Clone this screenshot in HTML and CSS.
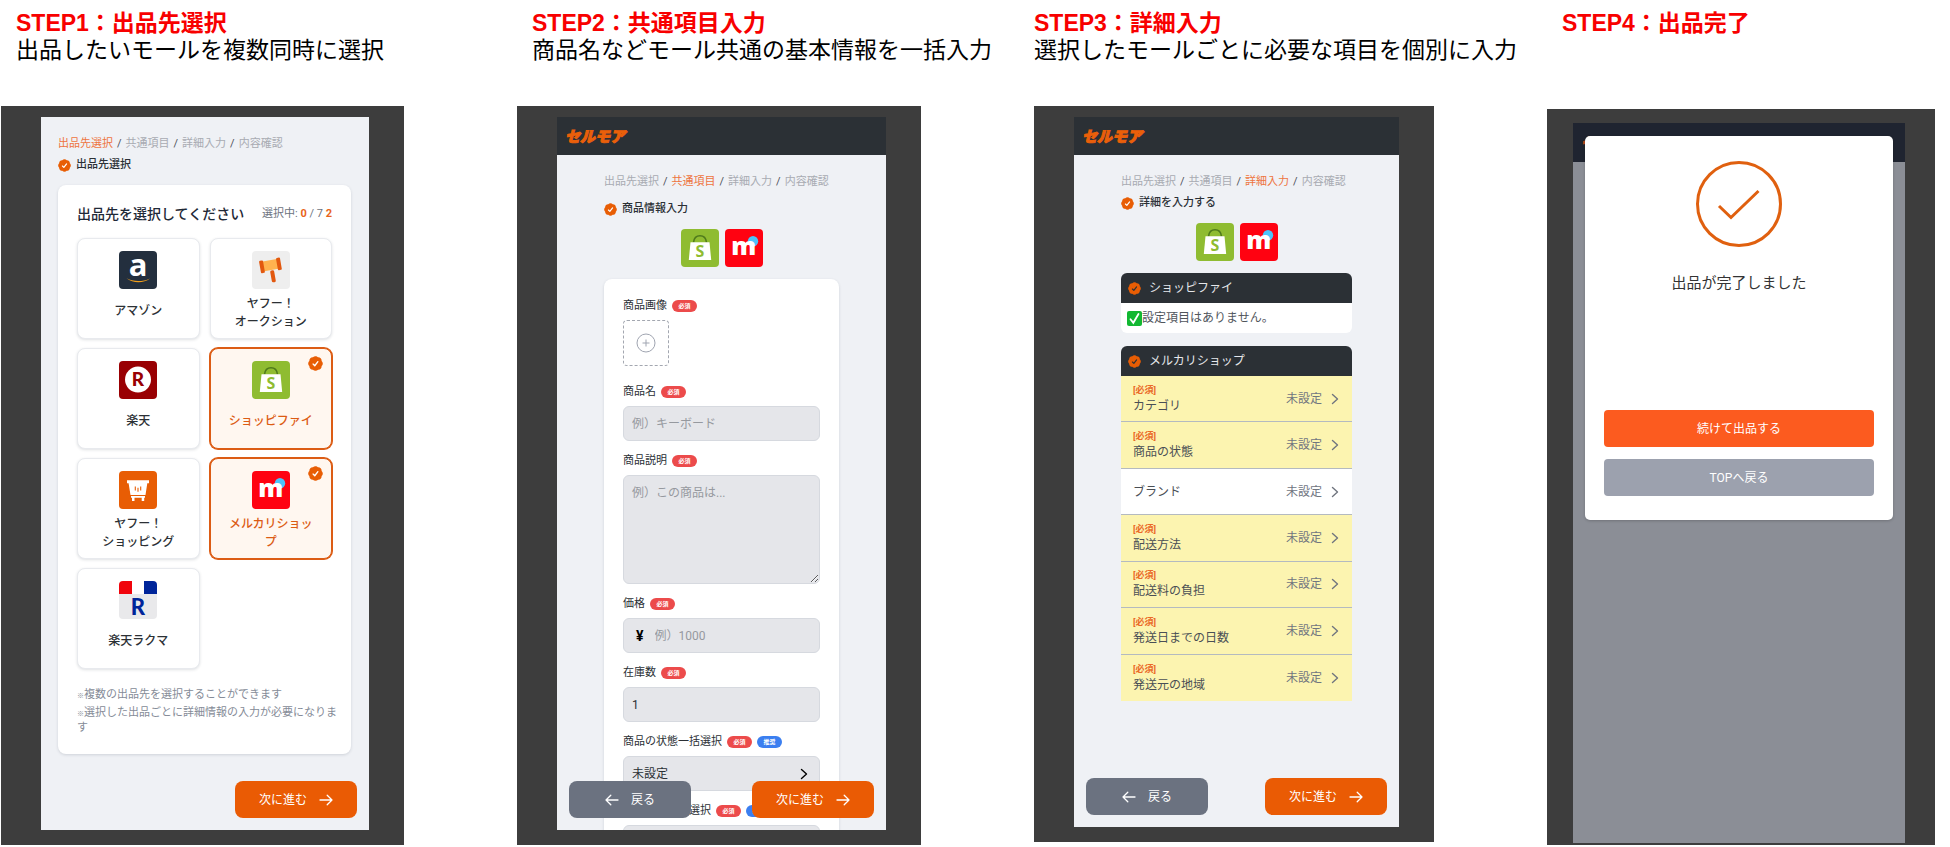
FILE: index.html
```html
<!DOCTYPE html>
<html lang="ja">
<head>
<meta charset="utf-8">
<meta name="viewport" content="width=device-width, initial-scale=1">
<title>セルモア 出品の流れ</title>
<link rel="stylesheet" href="styles.css">
</head>
<body>
<svg class="sprite" aria-hidden="true">
  <symbol id="badge" viewBox="2 2 20 20">
    <path fill="#e85d04" d="M8.603 3.799A4.49 4.49 0 0 1 12 2.25c1.357 0 2.573.6 3.397 1.549a4.49 4.49 0 0 1 3.498 1.307 4.491 4.491 0 0 1 1.307 3.497A4.49 4.49 0 0 1 21.75 12a4.49 4.49 0 0 1-1.549 3.397 4.491 4.491 0 0 1-1.307 3.497 4.491 4.491 0 0 1-3.497 1.307A4.49 4.49 0 0 1 12 21.75a4.49 4.49 0 0 1-3.397-1.549 4.49 4.49 0 0 1-3.498-1.306 4.491 4.491 0 0 1-1.307-3.498A4.49 4.49 0 0 1 2.25 12c0-1.357.6-2.573 1.549-3.397a4.49 4.49 0 0 1 1.307-3.497 4.49 4.49 0 0 1 3.497-1.307Z"/>
    <path fill="none" stroke="currentColor" stroke-width="1.8" stroke-linecap="round" stroke-linejoin="round" d="M8.8 12.8l2.2 2.2 4.2-5.4"/>
  </symbol>
  <symbol id="shopify" viewBox="0 0 38 38">
    <rect width="38" height="38" rx="4" fill="#8fbc31"/>
    <path d="M12.500 13.500C13 9 15.500 6.800 19 6.800s6 2.200 6.500 6.700" fill="none" stroke="#4f7a1c" stroke-width="1.600"/>
    <path d="M9.500 13.300h19L30.200 31H7.800z" fill="#fff"/>
    <text x="18.800" y="27.500" text-anchor="middle" class="mark mark-s">S</text>
  </symbol>
  <symbol id="mercari" viewBox="0 0 38 38">
    <rect width="38" height="38" rx="4" fill="#ff0211"/>
    <circle cx="28" cy="12.300" r="5.200" fill="#4dc3fa"/>
    <text x="18.800" y="25.500" text-anchor="middle" class="mark mark-m">m</text>
  </symbol>
  <symbol id="amazon" viewBox="0 0 38 38">
    <rect width="38" height="38" rx="4" fill="#232f3e"/>
    <text x="19" y="24.500" text-anchor="middle" class="mark mark-a">a</text>
    <path d="M7.500 27.300c7 3.600 16 3.600 23.500.1-6.500 5.100-17 5-23.500-.1z" fill="#f3a01c"/>
  </symbol>
  <symbol id="auction" viewBox="0 0 38 38">
    <rect width="38" height="38" rx="4" fill="#eee"/>
    <g transform="rotate(-10 19 14)">
      <rect x="10" y="9" width="17" height="10" fill="#ffb24f"/>
      <rect x="7.800" y="8" width="4" height="12.500" rx="1" fill="#e2580f"/>
      <rect x="25" y="8" width="4" height="12.500" rx="1" fill="#e2580f"/>
      <rect x="17" y="19.500" width="4" height="12" rx="1.500" fill="#e2580f"/>
    </g>
  </symbol>
  <symbol id="rakuten" viewBox="0 0 38 38">
    <rect width="38" height="38" rx="4" fill="#990003"/>
    <circle cx="19" cy="18.600" r="13" fill="#fff"/>
    <text x="19" y="25.300" text-anchor="middle" class="mark mark-r">R</text>
  </symbol>
  <symbol id="yshop" viewBox="0 0 38 38">
    <rect width="38" height="38" rx="4" fill="#e85d04"/>
    <path d="M8 9.300h22v3h-1.700L26.500 24h-15L9.600 12.300H8z" fill="#fff"/>
    <path d="M12 25h14v1.700h-.8v3.200h-2.500v-3.200h-7.200v3.200H13v-3.200h-1z" fill="#fff"/>
    <path d="M16.300 15.500v4M19 16.800v4M21.700 15.500v4" stroke="#e85d04" stroke-width="1.100"/>
  </symbol>
  <symbol id="rakuma" viewBox="0 0 38 38">
    <path d="M0 13h38v21a4 4 0 0 1-4 4H4a4 4 0 0 1-4-4z" fill="#e9e9eb"/>
    <path d="M0 13V4a4 4 0 0 1 4-4h9v13z" fill="#f0040c"/>
    <path d="M25 0h9a4 4 0 0 1 4 4v9H25z" fill="#00259a"/>
    <text x="19" y="33.500" text-anchor="middle" class="mark mark-k">R</text>
  </symbol>
  <symbol id="arrow-right" viewBox="0 0 14 14"><path d="M1 7h12M8.200 2.200 13 7l-4.800 4.800" fill="none" stroke="currentColor" stroke-width="1.300" stroke-linecap="round" stroke-linejoin="round"/></symbol>
  <symbol id="arrow-left" viewBox="0 0 14 14"><path d="M13 7H1M5.800 2.200 1 7l4.800 4.800" fill="none" stroke="currentColor" stroke-width="1.300" stroke-linecap="round" stroke-linejoin="round"/></symbol>
  <symbol id="chevron" viewBox="0 0 8 12"><path d="M1.500 1.500 6.500 6l-5 4.500" fill="none" stroke="currentColor" stroke-width="1.400" stroke-linecap="round" stroke-linejoin="round"/></symbol>
</svg>

<main class="board">
  <section class="step">
    <header class="caption">
      <h2>STEP1：出品先選択</h2>
      <p>出品したいモールを複数同時に選択</p>
    </header>
    <div class="stage">
      <div class="screen">
        <div class="content content-wide">
          <nav class="crumbs"><span class="now">出品先選択</span><i>/</i><span>共通項目</span><i>/</i><span>詳細入力</span><i>/</i><span>内容確認</span></nav>
          <h3 class="page-title"><svg><use href="#badge"/></svg>出品先選択</h3>
          <div class="card">
            <div class="card-head">
              <h4>出品先を選択してください</h4>
              <p>選択中: <b>0</b> / 7 <b>2</b></p>
            </div>
            <div class="malls">
              <label class="mall"><input type="checkbox"><svg class="logo"><use href="#amazon"/></svg><span>アマゾン</span></label>
              <label class="mall"><input type="checkbox"><svg class="logo"><use href="#auction"/></svg><span>ヤフー！<br>オークション</span></label>
              <label class="mall"><input type="checkbox"><svg class="logo"><use href="#rakuten"/></svg><span>楽天</span></label>
              <label class="mall picked"><input type="checkbox" checked><svg class="logo"><use href="#shopify"/></svg><span>ショッピファイ</span><svg class="tick"><use href="#badge"/></svg></label>
              <label class="mall"><input type="checkbox"><svg class="logo"><use href="#yshop"/></svg><span>ヤフー！<br>ショッピング</span></label>
              <label class="mall picked"><input type="checkbox" checked><svg class="logo"><use href="#mercari"/></svg><span>メルカリショップ</span><svg class="tick"><use href="#badge"/></svg></label>
              <label class="mall"><input type="checkbox"><svg class="logo"><use href="#rakuma"/></svg><span>楽天ラクマ</span></label>
            </div>
            <div class="notes">
              <p><small>※</small>複数の出品先を選択することができます</p>
              <p><small>※</small>選択した出品ごとに詳細情報の入力が必要になります</p>
            </div>
          </div>
        </div>
        <div class="actions">
          <button class="btn next" type="button">次に進む<svg><use href="#arrow-right"/></svg></button>
        </div>
      </div>
    </div>
  </section>

  <section class="step">
    <header class="caption">
      <h2>STEP2：共通項目入力</h2>
      <p>商品名などモール共通の基本情報を一括入力</p>
    </header>
    <div class="stage">
      <div class="screen">
        <div class="topbar"><span class="brand">セルモア</span></div>
        <div class="content">
          <nav class="crumbs"><span>出品先選択</span><i>/</i><span class="now">共通項目</span><i>/</i><span>詳細入力</span><i>/</i><span>内容確認</span></nav>
          <h3 class="page-title page-title-loose"><svg><use href="#badge"/></svg>商品情報入力</h3>
          <div class="chosen"><svg class="logo"><use href="#shopify"/></svg><svg class="logo"><use href="#mercari"/></svg></div>
          <form class="card form">
            <div class="field">
              <div class="label"><span>商品画像</span><em>必須</em></div>
              <div class="upload-row"><button class="upload" type="button" aria-label="画像を追加"><svg viewBox="0 0 20 20"><circle cx="10" cy="10" r="9"/><path d="M10 6.500v7M6.500 10h7"/></svg></button></div>
            </div>
            <div class="field">
              <div class="label"><label for="name">商品名</label><em>必須</em></div>
              <input id="name" class="box" type="text" placeholder="例）キーボード">
            </div>
            <div class="field">
              <div class="label"><label for="desc">商品説明</label><em>必須</em></div>
              <textarea id="desc" class="box" placeholder="例）この商品は..."></textarea>
            </div>
            <div class="field">
              <div class="label"><label for="price">価格</label><em>必須</em></div>
              <div class="box money"><b>¥</b><input id="price" type="text" placeholder="例）1000"></div>
            </div>
            <div class="field">
              <div class="label"><label for="stock">在庫数</label><em>必須</em></div>
              <input id="stock" class="box" type="text" value="1">
            </div>
            <div class="field">
              <div class="label"><label for="state">商品の状態一括選択</label><em>必須</em><em class="hint">推奨</em></div>
              <div class="pick"><select id="state" class="box"><option>未設定</option></select><svg><use href="#chevron"/></svg></div>
            </div>
            <div class="field">
              <div class="label"><label for="ship">配送方法一括選択</label><em>必須</em><em class="hint">推奨</em></div>
              <div class="pick"><select id="ship" class="box"><option>未設定</option></select><svg><use href="#chevron"/></svg></div>
            </div>
          </form>
        </div>
        <div class="actions">
          <button class="btn back" type="button"><svg><use href="#arrow-left"/></svg>戻る</button>
          <button class="btn next" type="button">次に進む<svg><use href="#arrow-right"/></svg></button>
        </div>
      </div>
    </div>
  </section>

  <section class="step step-short">
    <header class="caption caption-flush">
      <h2>STEP3：詳細入力</h2>
      <p>選択したモールごとに必要な項目を個別に入力</p>
    </header>
    <div class="stage">
      <div class="screen">
        <div class="topbar"><span class="brand">セルモア</span></div>
        <div class="content">
          <nav class="crumbs"><span>出品先選択</span><i>/</i><span>共通項目</span><i>/</i><span class="now">詳細入力</span><i>/</i><span>内容確認</span></nav>
          <h3 class="page-title"><svg><use href="#badge"/></svg>詳細を入力する</h3>
          <div class="chosen"><svg class="logo"><use href="#shopify"/></svg><svg class="logo"><use href="#mercari"/></svg></div>
          <div class="group">
            <h4><svg><use href="#badge"/></svg>ショッピファイ</h4>
            <p class="empty"><svg viewBox="0 0 15 15"><rect width="15" height="15" rx="2" fill="#12b832"/><path d="M3.500 8.200 6.300 11.800 11.500 3" fill="none" stroke="#fff" stroke-width="1.800" stroke-linecap="round"/></svg>設定項目はありません。</p>
          </div>
          <div class="group">
            <h4><svg><use href="#badge"/></svg>メルカリショップ</h4>
            <div class="rows">
              <button class="row must" type="button"><span class="what"><b>[必須]</b>カテゴリ</span><span>未設定</span><svg><use href="#chevron"/></svg></button>
              <button class="row must" type="button"><span class="what"><b>[必須]</b>商品の状態</span><span>未設定</span><svg><use href="#chevron"/></svg></button>
              <button class="row" type="button"><span class="what">ブランド</span><span>未設定</span><svg><use href="#chevron"/></svg></button>
              <button class="row must" type="button"><span class="what"><b>[必須]</b>配送方法</span><span>未設定</span><svg><use href="#chevron"/></svg></button>
              <button class="row must" type="button"><span class="what"><b>[必須]</b>配送料の負担</span><span>未設定</span><svg><use href="#chevron"/></svg></button>
              <button class="row must" type="button"><span class="what"><b>[必須]</b>発送日までの日数</span><span>未設定</span><svg><use href="#chevron"/></svg></button>
              <button class="row must" type="button"><span class="what"><b>[必須]</b>発送元の地域</span><span>未設定</span><svg><use href="#chevron"/></svg></button>
            </div>
          </div>
        </div>
        <div class="actions">
          <button class="btn back" type="button"><svg><use href="#arrow-left"/></svg>戻る</button>
          <button class="btn next" type="button">次に進む<svg><use href="#arrow-right"/></svg></button>
        </div>
      </div>
    </div>
  </section>

  <section class="step">
    <header class="caption caption-tall">
      <h2>STEP4：出品完了</h2>
    </header>
    <div class="stage stage-done">
      <div class="screen dimmed">
        <div class="topbar"><span class="brand">セルモア</span></div>
        <div class="modal" role="dialog" aria-labelledby="done">
          <svg class="done-mark" viewBox="0 0 88 88"><circle cx="44" cy="44" r="41.500"/><path d="M24 46l12 11.500 27.500-26.500"/></svg>
          <p id="done">出品が完了しました</p>
          <button class="again" type="button">続けて出品する</button>
          <button class="home" type="button">TOPへ戻る</button>
        </div>
      </div>
    </div>
  </section>
</main>
</body>
</html>
```

FILE: styles.css
```css
* { box-sizing: border-box; }

body {
  margin: 0;
  background: #fff;
  color: #2b3035;
  font-family: Roboto, "Noto Sans CJK JP", sans-serif;
  font-size: 12px;
  line-height: 18px;
}

h2, h3, h4, p { margin: 0; font-weight: 400; }

button, input, textarea, select { font: inherit; color: inherit; margin: 0; }

svg { display: block; flex: none; }

.sprite { display: none; }

.mark { font-family: "Open Sans", sans-serif; font-weight: 800; fill: #fff; }
.mark-s { font-size: 16px; font-weight: 700; fill: #8fbc31; }
.mark-m { font-size: 25px; }
.mark-a { font-size: 31px; font-weight: 700; }
.mark-r { font-family: Lato, sans-serif; font-size: 19px; font-weight: 900; fill: #990003; }
.mark-k { font-family: Lato, sans-serif; font-size: 22px; font-weight: 900; fill: #00259a; }

/* Board */
.board {
  display: grid;
  grid-template-columns: 403fr 404fr 400fr 388fr;
  column-gap: 113px;
  height: 100vh;
  min-height: 847px;
  padding: 0 15px 0 1px;
}

.step {
  display: flex;
  flex-direction: column;
  min-width: 0;
  min-height: 0;
  padding-bottom: 2px;
}
.step-short { padding-bottom: 5px; }

.caption {
  flex: none;
  height: 106px;
  padding: 10px 0 0 15px;
  color: #000;
  font-family: "Liberation Sans", "Noto Sans CJK JP", sans-serif;
  font-size: 23px;
  line-height: 27px;
  white-space: nowrap;
}
.caption h2 { color: #f80000; font-size: 23px; font-weight: 700; }
.caption-flush { padding-left: 0; }
.caption-tall { height: 109px; }

.stage {
  display: flex;
  flex: 1;
  min-height: 0;
  padding: 11px 35px 15px 40px;
  background: #3d3d3d;
}
.stage-done { padding: 14px 30px 2px 26px; }

.screen {
  position: relative;
  flex: 1;
  min-width: 0;
  overflow: hidden;
  background: #eff1f5;
}
.dimmed { background: #8b8e96; }

.topbar {
  display: flex;
  align-items: center;
  height: 38px;
  padding-left: 8px;
  background: #2b3035;
}
.dimmed .topbar { height: 39px; background: #1f2430; }
.brand {
  color: #ea5f0a;
  font-family: "Noto Sans CJK JP", sans-serif;
  font-size: 15px;
  font-style: italic;
  font-weight: 900;
  -webkit-text-stroke: 1px currentColor;
}
.dimmed .brand { color: #b8481a; }

.content { padding: 19px 47px 0; }
.content-wide { padding: 19px 18px 0 17px; }

.crumbs {
  display: flex;
  gap: 4px;
  color: #a8abb2;
  font-size: 11px;
  line-height: 16px;
  white-space: nowrap;
}
.crumbs i { color: #4b5057; font-style: normal; }
.crumbs .now { color: #ee7440; }

.page-title {
  display: flex;
  align-items: center;
  gap: 5px;
  margin-top: 5px;
  font-size: 11px;
  font-weight: 500;
  line-height: 16px;
  color: #2b3035;
}
.page-title svg { width: 13px; height: 13px; color: #fff; }
.page-title-loose { margin-top: 11px; }

.chosen { display: flex; justify-content: center; gap: 6px; margin: 12px 0; }
.logo { width: 38px; height: 38px; }

.card {
  margin-top: 12px;
  padding: 19px;
  border-radius: 8px;
  background: #fff;
  box-shadow: 0 1px 3px rgba(30, 40, 60, .15);
}

/* Mall selection */
.card-head {
  display: flex;
  align-items: center;
  justify-content: space-between;
  margin-bottom: 14px;
  line-height: 20px;
  white-space: nowrap;
}
.card-head h4 { color: #1f2937; font-size: 14px; font-weight: 500; }
.card-head p { color: #6b7280; font-size: 11px; }
.card-head b { color: #e8641b; font-weight: 700; }

.malls {
  display: grid;
  grid-template-columns: 1fr 1fr;
  grid-auto-rows: 101px;
  gap: 9px 10px;
}

.mall {
  position: relative;
  display: flex;
  flex-direction: column;
  align-items: center;
  padding: 12px 16px 0;
  border: 1px solid #e8eaee;
  border-radius: 8px;
  background: #fff;
  box-shadow: 0 1px 3px rgba(30, 40, 60, .14);
  text-align: center;
}
.mall input { position: absolute; opacity: 0; }
.mall span {
  display: flex;
  align-items: center;
  min-height: 32px;
  margin-top: 6px;
  font-weight: 500;
}
.picked {
  border-color: #dc5c14;
  background: #fff7f0;
  box-shadow: 0 0 0 1px #dc5c14;
  color: #dc5c14;
}
.tick { position: absolute; top: 7px; right: 8px; width: 15px; height: 15px; color: #fff; }

.notes {
  display: grid;
  gap: 3px;
  margin: 18px -8px 0 0;
  color: #858b97;
  font-size: 11px;
  line-height: 15px;
}
.notes small { font-size: 7px; line-height: 0; }

/* Floating buttons */
.actions {
  position: absolute;
  right: 12px;
  bottom: 12px;
  left: 12px;
  display: flex;
  justify-content: space-between;
}
.btn {
  display: flex;
  align-items: center;
  justify-content: center;
  gap: 12px;
  width: 122px;
  height: 37px;
  padding: 0;
  border: 0;
  border-radius: 8px;
  color: #fff;
}
.btn svg { width: 14px; height: 14px; }
.next { margin-left: auto; background: #ea5b04; }
.back { background: #6b7280; }

/* Shared item form */
.form { display: grid; gap: 12px; margin-top: 0; padding: 19px; }
.field { display: grid; gap: 6px; }
.label { display: flex; align-items: center; gap: 5px; font-size: 11px; line-height: 16px; }
.label em {
  width: 25px;
  height: 12px;
  border-radius: 6px;
  background: #ec4b4b;
  color: #fff;
  font-size: 6px;
  font-style: normal;
  font-weight: 700;
  line-height: 12px;
  text-align: center;
}

.label .hint { background: #3b7ff0; }

.upload-row { padding-bottom: 6px; }
.upload {
  display: flex;
  align-items: center;
  justify-content: center;
  width: 46px;
  height: 46px;
  padding: 0;
  border: 1px dashed #a3a7b0;
  border-radius: 4px;
  background: #fff;
}
.upload svg { width: 20px; height: 20px; fill: none; stroke: #a0a5b1; }

.box {
  display: block;
  width: 100%;
  height: 35px;
  padding: 0 8px;
  border: 1px solid #d6d9df;
  border-radius: 6px;
  background: #e5e6ea;
  appearance: none;
}
textarea.box { height: 109px; padding: 8px; resize: vertical; }
.box::placeholder, .money input::placeholder { color: #96999f; opacity: 1; }
.money { display: flex; align-items: center; gap: 11px; padding-left: 12px; }
.money b { color: #000; font-size: 14px; }
.money input { flex: 1; min-width: 0; padding: 0; border: 0; background: none; }
.pick { position: relative; }
.pick svg { position: absolute; top: 12px; right: 12px; width: 8px; height: 12px; color: #000; }

/* Per-mall details */
.group { overflow: hidden; margin-bottom: 13px; border-radius: 6px 6px 0 0; }
.group:has(.empty) { border-radius: 6px; }
.group h4 {
  display: flex;
  align-items: center;
  gap: 8px;
  height: 30px;
  padding-left: 7px;
  background: #2b3035;
  color: #e5e7eb;
}
.group h4 svg { width: 13px; height: 13px; color: #2b3035; }
.empty {
  display: flex;
  align-items: center;
  height: 30px;
  padding-left: 6px;
  background: #fff;
  color: #50555c;
}
.empty svg { width: 15px; height: 15px; }

.rows { display: grid; grid-auto-rows: 1fr; min-height: 325px; }
.row {
  display: flex;
  align-items: center;
  gap: 9px;
  padding: 0 13px 0 12px;
  border: 0;
  border-bottom: 1px solid #b4bac0;
  background: #fff;
  color: #70757f;
  text-align: left;
}
.row:last-child { border-bottom: 0; }
.must { background: #fcf4b0; }
.what { flex: 1; color: #4a4f55; }
.what b { display: block; color: #ea6a28; font-size: 9px; line-height: 14px; }
.row svg { width: 8px; height: 12px; }

/* Completion dialog */
.modal {
  position: absolute;
  top: 13px;
  right: 12px;
  left: 12px;
  display: flex;
  flex-direction: column;
  align-items: center;
  padding: 24px 19px;
  border-radius: 5px;
  background: #fff;
  box-shadow: 0 1px 3px rgba(0, 0, 0, .2);
}
.done-mark { width: 88px; height: 88px; fill: none; stroke: #e0600f; stroke-width: 3; }
.modal p { margin: 24px 0 116px; color: #333; font-size: 15px; line-height: 22px; }
.modal button {
  width: 100%;
  height: 37px;
  border: 0;
  border-radius: 4px;
  color: #fff;
}
.again { background: #fc5b1f; }
.home { margin-top: 12px; background: #9ca1ae; }
```
